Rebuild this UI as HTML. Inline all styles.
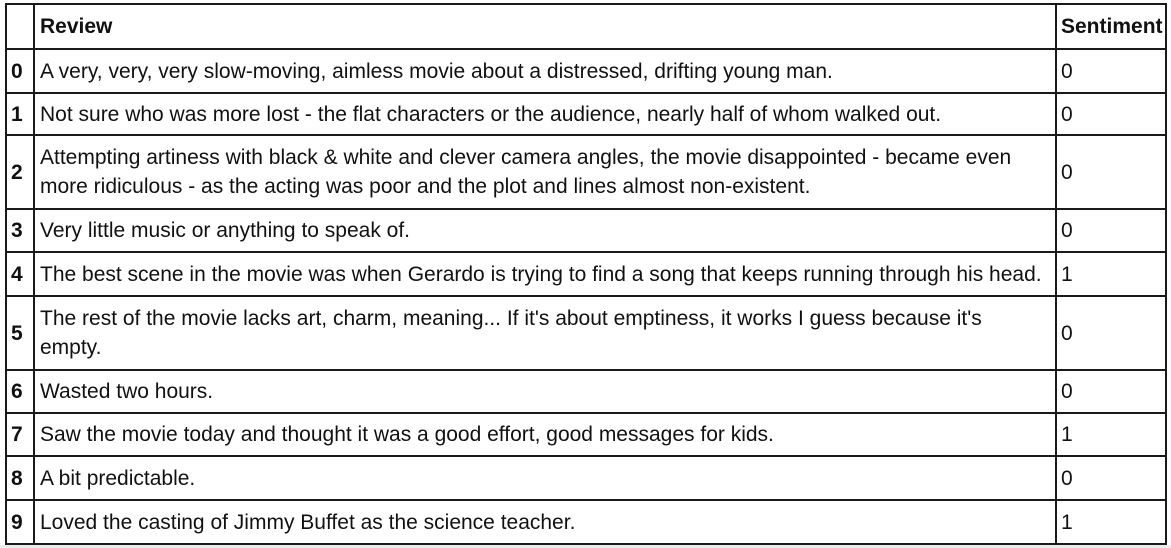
<!DOCTYPE html>
<html><head><style>
html,body{margin:0;padding:0;background:#fff;width:1171px;height:548px;overflow:hidden}
body{position:relative}
.bar{position:absolute;left:0;top:545px;width:1171px;height:3px;background:#ececec}
table{position:absolute;left:5px;top:3px;border-collapse:collapse;width:1162px;font-family:"Liberation Sans",sans-serif;font-size:21px;color:#111;table-layout:fixed}
td,th{border:2px solid #1a1a1a;padding:0 4px;text-align:left;line-height:29px;vertical-align:middle;overflow:hidden}
th{font-weight:bold;font-size:21px}
td:nth-child(2),th:nth-child(2){padding:0 10px 0 5px}
col.a{width:28px}col.c{width:110px}
td:first-child{font-weight:bold;padding:0 0 0 4px}
</style></head><body>
<table>
<colgroup><col class="a"><col><col class="c"></colgroup>
<tr style="height:45px"><th></th><th>Review</th><th>Sentiment</th></tr>
<tr style="height:44px"><td>0</td><td>A very, very, very slow-moving, aimless movie about a distressed, drifting young man.</td><td>0</td></tr>
<tr style="height:42px"><td>1</td><td>Not sure who was more lost - the flat characters or the audience, nearly half of whom walked out.</td><td>0</td></tr>
<tr style="height:74px"><td>2</td><td>Attempting artiness with black &amp; white and clever camera angles, the movie disappointed - became even more ridiculous - as the acting was poor and the plot and lines almost non-existent.</td><td>0</td></tr>
<tr style="height:43px"><td>3</td><td>Very little music or anything to speak of.</td><td>0</td></tr>
<tr style="height:44px"><td>4</td><td>The best scene in the movie was when Gerardo is trying to find a song that keeps running through his head.</td><td>1</td></tr>
<tr style="height:74px"><td>5</td><td>The rest of the movie lacks art, charm, meaning... If it's about emptiness, it works I guess because it's empty.</td><td>0</td></tr>
<tr style="height:43px"><td>6</td><td>Wasted two hours.</td><td>0</td></tr>
<tr style="height:43px"><td>7</td><td>Saw the movie today and thought it was a good effort, good messages for kids.</td><td>1</td></tr>
<tr style="height:44px"><td>8</td><td>A bit predictable.</td><td>0</td></tr>
<tr style="height:44px"><td>9</td><td>Loved the casting of Jimmy Buffet as the science teacher.</td><td>1</td></tr>
</table>
<div class="bar"></div>
</body></html>
